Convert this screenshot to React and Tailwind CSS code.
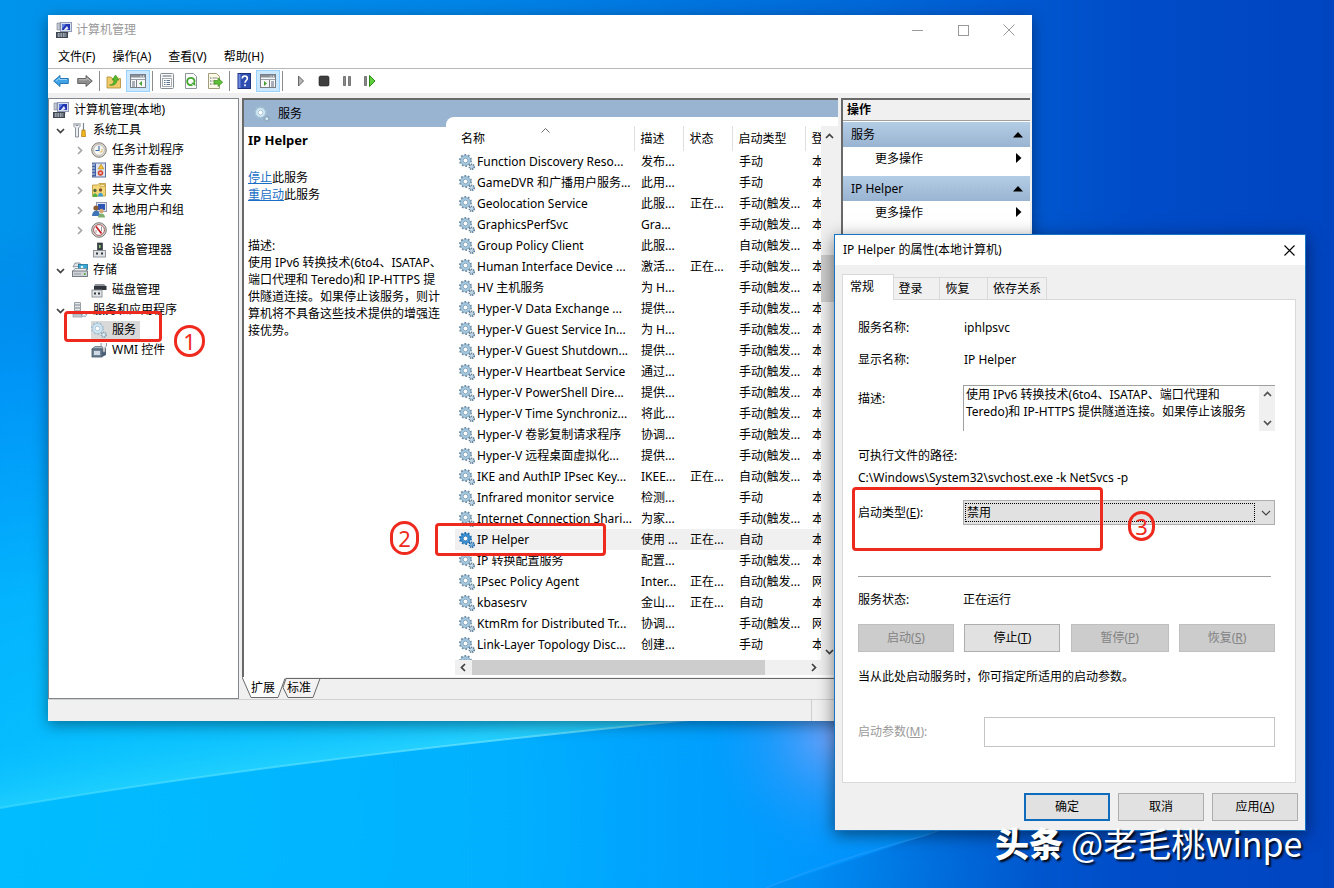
import React from "react";

const svgBase = { width: 16, height: 16, viewBox: "0 0 16 16", fill: "none", "aria-hidden": true, className: "block shrink-0" };

function Icon({ children }) {
  return <svg {...svgBase}>{children}</svg>;
}

/* ---------- tree and title icons ---------- */

const ComputerIcon = () => (
  <Icon>
    <rect x="4.5" y="0.5" width="11" height="9" fill="#d6dcec" stroke="#8f9bb8" />
    <rect x="6" y="2" width="8" height="6" fill="#2236b4" />
    <path d="M6 2h4l-4 5z" fill="#5f7fe0" />
    <path d="M9.5 9.5h3v2h-3z" fill="#9aa4b8" />
    <path d="M1 1h3v7H1z" fill="#c3c9d4" stroke="#747c8c" strokeWidth="0.6" />
    <rect x="0.5" y="10.5" width="11" height="5" fill="#5b6470" stroke="#3e4650" />
    <path d="M2 12h8M2 14h8" stroke="#d8dde4" strokeDasharray="1.5 1" />
    <path d="M7 9l4-5 1.500 3z" fill="#e8ecf8" />
  </Icon>
);

const ToolsIcon = () => (
  <Icon>
    <path d="M2 1v3.500L3.500 6v9h3V6L8 4.500V1M4 1v2.500h2V1" fill="#eceff2" stroke="#7d858e" strokeWidth="0.9" />
    <path d="M11.500 1v7" stroke="#7d858e" strokeWidth="1.200" />
    <path d="M10 8h3l.5 6.500h-4z" fill="#f2b81c" stroke="#a87408" strokeWidth="0.7" />
  </Icon>
);

const ClockIcon = () => (
  <Icon>
    <circle cx="8" cy="8" r="7.300" fill="#d9d6cf" stroke="#77726b" strokeWidth="0.9" />
    <circle cx="8" cy="8" r="5.300" fill="#f7f8f4" stroke="#a9a59c" strokeWidth="0.6" />
    <path d="M8 4v4.500H4.500" stroke="#3568a8" strokeWidth="1.100" />
    <path d="M11 6.500v3.500H8.500" stroke="#dca93a" strokeWidth="0.8" />
  </Icon>
);

const EventIcon = () => (
  <Icon>
    <rect x="1.500" y="1" width="13" height="14" fill="#dfe6f2" stroke="#5b6f9c" />
    <rect x="2" y="1.500" width="3" height="13" fill="#3e5fa8" />
    <path d="M1 3h3M1 6h3M1 9h3M1 12h3" stroke="#fff" strokeWidth="0.8" />
    <path d="M10 2l3 5H7z" fill="#f3c13a" stroke="#a67b12" strokeWidth="0.5" />
    <circle cx="9.500" cy="11" r="2.800" fill="#d6402c" />
    <path d="M8.300 9.800l2.400 2.400m0-2.400l-2.400 2.400" stroke="#fff" strokeWidth="0.8" />
  </Icon>
);

const SharedIcon = () => (
  <Icon>
    <path d="M1.500 3h5l1.500-1.500h6.500V14h-13z" fill="#f5d77a" stroke="#b99335" strokeWidth="0.8" />
    <path d="M9 2.500h4.500v2H9z" fill="#fbe9a9" stroke="#b99335" strokeWidth="0.6" />
    <circle cx="4" cy="8.500" r="1.700" fill="#556b3a" />
    <circle cx="9.500" cy="8" r="1.700" fill="#7a4f2c" />
    <path d="M1.500 15c0-5 5-5 5 0z" fill="#55b04a" />
    <path d="M7 14.500c0-5 5-5 5 0z" fill="#3c9bd0" />
  </Icon>
);

const UsersIcon = () => (
  <Icon>
    <rect x="5.500" y="0.5" width="10" height="9" fill="#dfe4ee" stroke="#8c97ae" />
    <rect x="7" y="2" width="7" height="6" fill="#2c55b8" />
    <circle cx="5" cy="6" r="2.600" fill="#8a5c33" />
    <path d="M1 14c0-7 8-7 8 0z" fill="#3f75b8" />
    <circle cx="10.500" cy="9" r="2.200" fill="#d8a66f" />
    <path d="M7 15.500c0-5.500 7-5.500 7 0z" fill="#7db070" />
  </Icon>
);

const PerfIcon = () => (
  <Icon>
    <circle cx="8" cy="8" r="7.300" fill="#d5d5d3" stroke="#6c6c6a" strokeWidth="0.9" />
    <circle cx="8" cy="8" r="5.400" fill="#fff" stroke="#9a3a3a" strokeWidth="0.8" />
    <path d="M5 4.500l5.500 7" stroke="#c8202a" strokeWidth="1.800" />
    <path d="M10.500 4.500v5M5 8v3" stroke="#8c8c8c" strokeWidth="0.9" />
  </Icon>
);

const DeviceIcon = () => (
  <Icon>
    <rect x="6.500" y="1" width="5" height="8" fill="#3c4248" stroke="#22272b" strokeWidth="0.6" />
    <rect x="8" y="3" width="1.500" height="3" fill="#8fd07a" />
    <rect x="2.500" y="8.500" width="12" height="6.500" fill="#dfe2e5" stroke="#868c93" strokeWidth="0.9" />
    <path d="M5 10.500h2v2H5zM10 10.500h2v2h-2z" fill="#33383d" />
  </Icon>
);

const StorageIcon = () => (
  <Icon>
    <path d="M1 5l2-4h5l1 3z" fill="#e2e5e8" stroke="#7c848d" strokeWidth="0.8" />
    <rect x="6.500" y="2.500" width="9" height="5" fill="#37a9d8" stroke="#1f6f96" strokeWidth="0.8" />
    <circle cx="10" cy="5" r="1.300" fill="#dff3fb" />
    <path d="M1 9l2-2.500h11.500V9" fill="#eef0f2" stroke="#7c848d" strokeWidth="0.8" />
    <rect x="0.500" y="9" width="15" height="5.500" fill="#d0d4d8" stroke="#6b737b" strokeWidth="0.9" />
    <path d="M12 11h1.500v2H12z" fill="#4caf3a" />
    <path d="M2 12h7" stroke="#8f979f" />
  </Icon>
);

const DiskIcon = () => (
  <Icon>
    <path d="M4 2h9l2.500 2.500H3z" fill="#8d949b" />
    <rect x="3" y="4" width="12.500" height="4" fill="#30363b" />
    <rect x="1" y="8" width="10" height="7" fill="#e2e5e8" stroke="#858c93" strokeWidth="0.9" />
    <path d="M3 10.500h2v2H3zM7 10.500h2v2H7z" fill="#33383d" />
  </Icon>
);

const ServerIcon = () => (
  <Icon>
    <path d="M2.500 0.500h6v12h-6z" fill="#e4e8ea" stroke="#8f979d" strokeWidth="0.9" />
    <path d="M3 3h5M3 6h5M3 9h5" stroke="#7a838a" />
    <rect x="1" y="12" width="9" height="3" fill="#c2c9ce" stroke="#8f979d" strokeWidth="0.7" />
    <circle cx="12" cy="12" r="2.400" stroke="#7fa0b8" strokeWidth="1.600" strokeDasharray="1.200 0.700" />
  </Icon>
);

const WmiIcon = () => (
  <Icon>
    <path d="M1 7l3-2.500h9L15 7z" fill="#a9b7c4" stroke="#566574" strokeWidth="0.7" />
    <rect x="1" y="7" width="10" height="8" fill="#6d8296" stroke="#42535f" strokeWidth="0.8" />
    <path d="M11 7h4v6l-4 2z" fill="#4a6074" />
    <path d="M3 9h6v4H3z" fill="#cfdae4" />
    <path d="M10 1v3l2 1.500V10h2V5.500L15.500 4V1" fill="#f3f4f5" stroke="#79828a" strokeWidth="0.8" />
  </Icon>
);

function GearIcon({ tone = "normal" }) {
  const c = {
    normal: { teeth: "#6c8da6", ring: "#a4c8e0", edge: "#64869f", small: "#5f7f97" },
    active: { teeth: "#1d6fb4", ring: "#3a8fd0", edge: "#1560a0", small: "#1a66a8" },
    faint: { teeth: "#a4c0d2", ring: "#cfe6f3", edge: "#90b4ca", small: "#8fa9ba" },
  }[tone];
  return (
    <Icon>
      <circle cx="6.500" cy="6.500" r="5.500" stroke={c.teeth} strokeWidth="2" strokeDasharray="1.700 1.756" />
      <circle cx="6.500" cy="6.500" r="3.800" fill="#fff" stroke={c.ring} strokeWidth="2.600" />
      <circle cx="6.500" cy="6.500" r="5" stroke={c.edge} strokeWidth="0.5" />
      <circle cx="6.500" cy="6.500" r="2.300" stroke={c.edge} strokeWidth="0.7" />
      <circle cx="12.800" cy="12.800" r="2.300" stroke={c.small} strokeWidth="1.900" strokeDasharray="1.200 0.606" />
      <circle cx="12.800" cy="12.800" r="1.400" fill={c.ring} />
      <circle cx="12.800" cy="12.800" r="0.500" fill="#fff" />
    </Icon>
  );
}

/* ---------- toolbar icons ---------- */

const BackIcon = () => (
  <Icon><path d="M0.700 8L7 2.500v3h8.300v5H7v3z" fill="#3fa3e6" stroke="#1b6db0" strokeWidth="0.9" /><path d="M3 8l3.500-3v1.500H14" stroke="#a9dbfa" strokeWidth="0.8" /></Icon>
);
const ForwardIcon = () => (
  <Icon><path d="M15.300 8L9 2.500v3H0.700v5H9v3z" fill="#8d8d8d" stroke="#5e5e5e" strokeWidth="0.9" /><path d="M2 6.800h8V5l3 3" stroke="#c9c9c9" strokeWidth="0.8" /></Icon>
);
const UpFolderIcon = () => (
  <Icon>
    <path d="M1 4h4l1.500 1.500H14.500V15H1z" fill="#f1cb69" stroke="#b08a35" strokeWidth="0.8" />
    <path d="M8.500 4l4.500-1v3z" fill="#fff3c4" />
    <path d="M3.500 12c3 0 4.500-2 4.500-5H6l3.500-5L13 7h-2c0 4-3 6-7.500 5z" fill="#58b82c" stroke="#38861a" strokeWidth="0.6" />
  </Icon>
);
const PaneIcon = ({ side }) => (
  <Icon>
    <rect x="0.500" y="1.500" width="15" height="13" fill="#f7f7f7" stroke="#7a7f86" />
    <path d="M1 2h14v2.500H1z" fill="#8a9099" />
    <path d="M10.500 3.200h1M13 3.200h1" stroke="#fff" />
    <path d="M1 6.500h14" stroke="#9aa0a8" />
    {side === "left" ? (
      <>
        <path d="M6.500 7v7.500" stroke="#7a7f86" />
        <path d="M2 9h3M2 11h3M2 13h3" stroke="#5c6b80" />
        <path d="M12 8v5L9 10.500z" fill="#46a032" />
      </>
    ) : (
      <>
        <path d="M9.500 7v7.500" stroke="#7a7f86" />
        <path d="M11 9h3M11 11h3M11 13h3" stroke="#5c6b80" />
        <path d="M4 8v5l3-2.500z" fill="#46a032" />
      </>
    )}
  </Icon>
);
const PropertiesIcon = () => (
  <Icon>
    <rect x="1.500" y="0.500" width="13" height="15" rx="1" fill="#fafafa" stroke="#868c94" />
    <path d="M3.500 3h9" stroke="#9299a1" strokeWidth="1.500" />
    <rect x="3.500" y="5.500" width="9" height="8" fill="#fff" stroke="#9299a1" strokeWidth="0.8" />
    <path d="M5 7.500h1.500M7.500 7.500H11M5 9.500h1.500M7.500 9.500H11M5 11.500h1.500M7.500 11.500H11" stroke="#5d7390" />
  </Icon>
);
const RefreshIcon = () => (
  <Icon>
    <path d="M2.500 0.500h8l3 3v12h-11z" fill="#fcfcfc" stroke="#8f959c" />
    <path d="M11.500 9a3.700 3.700 0 1 0-2 2.800" stroke="#3fa52a" strokeWidth="1.800" />
    <path d="M8 10l4.500 3-.5-4z" fill="#3fa52a" />
  </Icon>
);
const ExportIcon = () => (
  <Icon>
    <path d="M1.500 0.500h8l3 3v12h-11z" fill="#fcf9e6" stroke="#a39c7c" />
    <path d="M3 5h1.500M3 8h1.500M3 11h1.500" stroke="#5b6b80" strokeWidth="1.200" />
    <path d="M5.500 5h5M5.500 8h3M5.500 11h4" stroke="#8f9390" />
    <path d="M7 7.500h4V5l4.700 4.200L11 13.500V11H7z" fill="#5cbf36" stroke="#35861a" strokeWidth="0.6" />
  </Icon>
);
const HelpIcon = () => (
  <svg {...svgBase}>
    <rect x="2" y="0.500" width="12.500" height="15" fill="#2f4fb0" stroke="#1d3280" />
    <path d="M2.500 1h2v14h-2z" fill="#6f8be0" />
    <path d="M6.300 5.500c0-3.300 5-3.300 5 0 0 2-2.300 2-2.300 4.300M9 11.300v1.900" stroke="#fff" strokeWidth="1.600" />
  </svg>
);
const PlayIcon = () => (
  <Icon><path d="M5.500 3v10l5-5z" fill="#b5b5b5" stroke="#666" strokeWidth="1" /></Icon>
);
const StopIcon = () => (
  <Icon><rect x="3" y="3" width="10" height="10" rx="1.500" fill="#3e3e3e" stroke="#222" strokeWidth="0.6" /></Icon>
);
const PauseIcon = () => (
  <Icon><path d="M4.500 3.500h2v9h-2zM9.500 3.500h2v9h-2z" fill="#8a8a8a" stroke="#555" strokeWidth="0.7" /></Icon>
);
const RestartIcon = () => (
  <Icon><path d="M2.500 3.500h2v9h-2z" fill="#8a8a8a" stroke="#555" strokeWidth="0.7" /><path d="M7.500 2.500v11l5.500-5.500z" fill="#5fce3c" stroke="#2c8a18" strokeWidth="1" /></Icon>
);

function Chevron({ dir, className }) {
  const d = { up: "M1 6l3.500-3.500L8 6", down: "M1 3l3.500 3.500L8 3", left: "M6 1L2.500 4.500 6 8", right: "M3 1l3.500 3.500L3 8" }[dir];
  return (
    <svg width="9" height="9" viewBox="0 0 9 9" fill="none" aria-hidden="true" className={className}>
      <path d={d} stroke="currentColor" strokeWidth="1.700" />
    </svg>
  );
}

/* ---------- data ---------- */

const tree = [
  { level: 0, text: "计算机管理(本地)", Pic: ComputerIcon },
  { level: 1, text: "系统工具", Pic: ToolsIcon, arrow: "down" },
  { level: 2, text: "任务计划程序", Pic: ClockIcon, arrow: "right" },
  { level: 2, text: "事件查看器", Pic: EventIcon, arrow: "right" },
  { level: 2, text: "共享文件夹", Pic: SharedIcon, arrow: "right" },
  { level: 2, text: "本地用户和组", Pic: UsersIcon, arrow: "right" },
  { level: 2, text: "性能", Pic: PerfIcon, arrow: "right" },
  { level: 2, text: "设备管理器", Pic: DeviceIcon },
  { level: 1, text: "存储", Pic: StorageIcon, arrow: "down" },
  { level: 2, text: "磁盘管理", Pic: DiskIcon },
  { level: 1, text: "服务和应用程序", Pic: ServerIcon, arrow: "down" },
  { level: 2, text: "服务", Pic: () => <GearIcon tone="faint" />, selected: true },
  { level: 2, text: "WMI 控件", Pic: WmiIcon },
];

const M = "手动";
const A = "自动";
const MT = "手动(触发...";
const AT = "自动(触发...";
const ON = "正在...";

const services = [
  ["Function Discovery Reso...", "发布...", "", M, "本"],
  ["GameDVR 和广播用户服务...", "此用...", "", M, "本"],
  ["Geolocation Service", "此服...", ON, MT, "本"],
  ["GraphicsPerfSvc", "Gra...", "", MT, "本"],
  ["Group Policy Client", "此服...", "", AT, "本"],
  ["Human Interface Device ...", "激活...", ON, MT, "本"],
  ["HV 主机服务", "为 H...", "", MT, "本"],
  ["Hyper-V Data Exchange ...", "提供...", "", MT, "本"],
  ["Hyper-V Guest Service In...", "为 H...", "", MT, "本"],
  ["Hyper-V Guest Shutdown...", "提供...", "", MT, "本"],
  ["Hyper-V Heartbeat Service", "通过...", "", MT, "本"],
  ["Hyper-V PowerShell Dire...", "提供...", "", MT, "本"],
  ["Hyper-V Time Synchroniz...", "将此...", "", MT, "本"],
  ["Hyper-V 卷影复制请求程序", "协调...", "", MT, "本"],
  ["Hyper-V 远程桌面虚拟化...", "提供...", "", MT, "本"],
  ["IKE and AuthIP IPsec Key...", "IKEE...", ON, AT, "本"],
  ["Infrared monitor service", "检测...", "", M, "本"],
  ["Internet Connection Shari...", "为家...", "", MT, "本"],
  ["IP Helper", "使用 ...", ON, A, "本"],
  ["IP 转换配置服务", "配置...", "", MT, "本"],
  ["IPsec Policy Agent", "Inter...", ON, AT, "网"],
  ["kbasesrv", "金山...", ON, A, "本"],
  ["KtmRm for Distributed Tr...", "协调...", "", MT, "网"],
  ["Link-Layer Topology Disc...", "创建...", "", M, "本"],
];

/* ---------- main window ---------- */

function ToolButton({ label, on, children }) {
  return (
    <button type="button" aria-label={label} className={"flex h-[22px] w-6 items-center justify-center " + (on ? "border border-[#99d1ff] bg-[#cce8ff]" : "")}>
      {children}
    </button>
  );
}
const ToolSep = () => <span className="mx-0.5 h-5 w-px bg-[#8c8c8c]" />;

function TitleBar() {
  return (
    <header className="flex h-[30px] items-center bg-white">
      <span className="pl-2"><ComputerIcon /></span>
      <h1 className="flex-1 pl-1 text-[#999]">计算机管理</h1>
      <button type="button" aria-label="最小化" className="flex h-full w-[46px] items-center justify-center">
        <svg width="11" height="11" viewBox="0 0 11 11" aria-hidden="true"><path d="M0 5.500h11" stroke="#999" /></svg>
      </button>
      <button type="button" aria-label="最大化" className="flex h-full w-[46px] items-center justify-center">
        <svg width="11" height="11" viewBox="0 0 11 11" aria-hidden="true" fill="none"><rect x="0.500" y="0.500" width="10" height="10" stroke="#999" /></svg>
      </button>
      <button type="button" aria-label="关闭" className="flex h-full w-[46px] items-center justify-center">
        <svg width="12" height="12" viewBox="0 0 12 12" aria-hidden="true"><path d="M.5.5l11 11m0-11l-11 11" stroke="#999" /></svg>
      </button>
    </header>
  );
}

function Tree() {
  const indent = ["pl-1", "pl-[7px]", "pl-[26px]"];
  return (
    <nav aria-label="控制台树" className="w-[191px] shrink-0 border border-[#828790] bg-white pt-px">
      <ul>
        {tree.map((n) => (
          <li key={n.text}>
            <button type="button" className={"flex h-5 w-full items-center text-left " + indent[n.level]}>
              {n.level > 0 && (
                <span className="w-4 shrink-0">
                  {n.arrow && <Chevron dir={n.arrow} className={n.arrow === "down" ? "text-[#404040]" : "text-[#a6a6a6]"} />}
                </span>
              )}
              <span className={"flex h-[18px] items-center gap-[5px] pr-1 " + (n.selected ? "bg-[#d9d9d9]" : "")}>
                <n.Pic />
                {n.text}
              </span>
            </button>
          </li>
        ))}
      </ul>
    </nav>
  );
}

function ServiceTable() {
  return (
    <table className="w-full table-fixed border-collapse">
      <colgroup>
        <col />
        <col className="w-[49px]" />
        <col className="w-[49px]" />
        <col className="w-[73px]" />
        <col className="w-4" />
      </colgroup>
      <thead>
        <tr className="h-[25px]">
          {["名称", "描述", "状态", "启动类型", "登"].map((h, i) => (
            <th key={h} scope="col" className={"relative overflow-hidden whitespace-nowrap p-0 text-left font-normal " + (i === 0 ? "pl-1.5" : "border-l border-[#e0e0e0] pl-1.5")}>
              {h}
              {i === 0 && (
                <svg width="9" height="5" viewBox="0 0 9 5" fill="none" aria-hidden="true" className="absolute left-[86px] top-0.5">
                  <path d="M.5 4.500l4-4 4 4" stroke="#6d6d6d" />
                </svg>
              )}
            </th>
          ))}
        </tr>
      </thead>
      <tbody>
        {services.map((row) => {
          const sel = row[0] === "IP Helper";
          return (
            <tr key={row[0]} className={"h-[21px] " + (sel ? "bg-[#f0f0f0]" : "")}>
              {row.map((cell, i) => (
                <td key={i} className={"overflow-hidden whitespace-nowrap p-0 leading-5 " + (i === 0 ? "" : "pl-[7px]")}>
                  {i === 0 ? (
                    <span className="flex items-center gap-0.5 pl-1">
                      <GearIcon tone={sel ? "active" : "normal"} />
                      {cell}
                    </span>
                  ) : (
                    cell
                  )}
                </td>
              ))}
            </tr>
          );
        })}
      </tbody>
    </table>
  );
}

function ServicesPane() {
  return (
    <section className="flex w-[596px] shrink-0 flex-col">
      <div className="flex border-l-2 border-t-2 border-[#696969] bg-[#99b4d1]">
        <div className="flex w-[202px] shrink-0 flex-col">
          <h2 className="flex h-[27px] items-center gap-2 pl-2.5">
            <GearIcon tone="faint" />
            服务
          </h2>
          <div className="flex-1 bg-white pl-1 leading-[17px]">
            <h3 className="pt-[5px] text-[13px] font-bold">IP Helper</h3>
            <p className="pt-5">
              <a href="#stop" className="text-[#1a6fc4] underline">停止</a>此服务
            </p>
            <p>
              <a href="#restart" className="text-[#1a6fc4] underline">重启动</a>此服务
            </p>
            <p className="whitespace-pre pt-[34px]">
              {"描述:\n使用 IPv6 转换技术(6to4、ISATAP、\n端口代理和 Teredo)和 IP-HTTPS 提\n供隧道连接。如果停止该服务，则计\n算机将不具备这些技术提供的增强连\n接优势。"}
            </p>
          </div>
        </div>
        <div className="min-w-0 flex-1 pt-[17px]">
          <div className="rounded-tl-lg bg-white pb-0.5 pl-[9px] pt-[9px]">
            <div className="flex">
              <div className="min-w-0 flex-1">
                <ServiceTable />
                <div className="h-[5px] overflow-hidden pl-1"><GearIcon /></div>
              </div>
              <div className="flex w-[17px] shrink-0 flex-col items-center bg-[#f0f0f0] text-[#404040]">
                <Chevron dir="up" className="mt-1.5" />
                <span className="mt-[114px] h-[47px] w-full bg-[#cdcdcd]" />
                <span className="flex-1" />
                <Chevron dir="down" className="mb-1" />
              </div>
            </div>
            <div className="flex h-[15px] items-center bg-[#f0f0f0] pr-5 text-[#404040]">
              <Chevron dir="left" className="mx-1" />
              <span className="h-full w-[293px] bg-[#cdcdcd]" />
              <span className="flex-1" />
              <Chevron dir="right" />
            </div>
          </div>
        </div>
      </div>
      <div className="relative h-[22px]">
        <svg width="100%" height="22" aria-hidden="true" className="absolute inset-0">
          <path d="M78 1.500h519" stroke="#696969" />
          <path d="M44 1.500h34l-7 19H46l-5-10z" fill="#f4f2f2" stroke="#696969" />
          <path d="M0 0l9 20.500h27L43 0z" fill="#fff" />
          <path d="M0 0l9 20.500h27L43 1.500" fill="none" stroke="#696969" />
        </svg>
        <div role="tablist" className="relative flex h-full items-center gap-3 pl-[9px]">
          <button type="button" role="tab" aria-selected="true">扩展</button>
          <button type="button" role="tab" aria-selected="false">标准</button>
        </div>
      </div>
    </section>
  );
}

function ActionGroup({ title }) {
  return (
    <section>
      <h3 className="flex h-[25px] items-center justify-between bg-linear-to-b from-[#b4cde6] to-[#99b4d1] pl-2 pr-[7px]">
        {title}
        <svg width="10" height="6" viewBox="0 0 10 6" aria-hidden="true"><path d="M0 5.500L5 0l5 5.500z" /></svg>
      </h3>
      <button type="button" className="flex h-[29px] w-full items-start justify-between pl-8 pr-2 pt-0.5 text-left leading-5">
        更多操作
        <svg width="6" height="10" viewBox="0 0 6 10" aria-hidden="true" className="mt-1"><path d="M0 0l5.500 5L0 10z" /></svg>
      </button>
    </section>
  );
}

function ManagementWindow() {
  return (
    <main className="absolute left-12 top-[15px] w-[984px] bg-[#f0f0f0] shadow-[0_4px_14px_rgba(0,0,0,0.4)]">
      <TitleBar />
      <div role="menubar" className="flex h-6 items-center gap-[17px] border-b border-[#b8b8b8] bg-white pl-2.5">
        {["文件(F)", "操作(A)", "查看(V)", "帮助(H)"].map((m) => (
          <button key={m} type="button" role="menuitem">{m}</button>
        ))}
      </div>
      <div role="toolbar" aria-label="工具栏" className="flex h-6 items-center bg-white pl-px">
        <ToolButton label="后退"><BackIcon /></ToolButton>
        <ToolButton label="前进"><ForwardIcon /></ToolButton>
        <ToolSep />
        <ToolButton label="上移"><UpFolderIcon /></ToolButton>
        <ToolButton label="显示控制台树" on><PaneIcon side="left" /></ToolButton>
        <ToolSep />
        <ToolButton label="属性"><PropertiesIcon /></ToolButton>
        <ToolButton label="刷新"><RefreshIcon /></ToolButton>
        <ToolButton label="导出列表"><ExportIcon /></ToolButton>
        <ToolSep />
        <ToolButton label="帮助"><HelpIcon /></ToolButton>
        <ToolButton label="显示操作窗格" on><PaneIcon side="right" /></ToolButton>
        <ToolSep />
        <div className="flex gap-0 pl-1 [&>button]:w-[23px]">
          <ToolButton label="启动服务"><PlayIcon /></ToolButton>
          <ToolButton label="停止服务"><StopIcon /></ToolButton>
          <ToolButton label="暂停服务"><PauseIcon /></ToolButton>
          <ToolButton label="重启动服务"><RestartIcon /></ToolButton>
        </div>
      </div>
      <div className="flex pr-0.5 pt-[5px]">
        <Tree />
        <div className="w-[3px] shrink-0" />
        <ServicesPane />
        <div className="w-[3px] shrink-0" />
        <aside className="flex-1 border-l-2 border-t-2 border-[#696969] bg-white">
          <h2 className="mb-px h-[21px] border-b border-[#a0a0a0] bg-[#f0f0f0] pl-1 font-bold leading-5">操作</h2>
          <ActionGroup title="服务" />
          <ActionGroup title="IP Helper" />
        </aside>
      </div>
      <footer className="flex h-[22px] border-t border-[#d0d0d0]">
        <span className="w-[764px] border-r border-[#d0d0d0]" />
      </footer>
    </main>
  );
}

/* ---------- properties dialog ---------- */

function PushButton({ children, disabled, primary, className = "" }) {
  const look = disabled
    ? "border border-[#bfbfbf] bg-[#cccccc] text-[#838383]"
    : primary
      ? "border-2 border-[#0f6cbd] bg-[#e1e1e1]"
      : "border border-[#adadad] bg-[#e1e1e1]";
  return (
    <button type="button" disabled={disabled} className={"h-7 " + look + " " + className}>
      {children}
    </button>
  );
}

function PropertiesDialog() {
  return (
    <div role="dialog" aria-label="IP Helper 的属性(本地计算机)" className="absolute left-[834px] top-[234px] w-[472px] border border-[#1874c4] bg-[#f0f0f0] shadow-[0_4px_16px_rgba(0,0,0,0.5)]">
      <header className="flex h-[30px] items-center justify-between bg-white pl-2 pr-2.5">
        <h2>IP Helper 的属性(本地计算机)</h2>
        <button type="button" aria-label="关闭">
          <svg width="11" height="11" viewBox="0 0 11 11" aria-hidden="true"><path d="M.5.5l10 10m0-10l-10 10" stroke="#000" strokeWidth="1.100" /></svg>
        </button>
      </header>
      <div className="px-[7px] pb-[9px] pt-[9px]">
        <div role="tablist" className="flex items-end">
          <button type="button" role="tab" aria-selected="true" className="relative z-10 -mb-px h-[26px] w-[52px] border border-b-0 border-[#d9d9d9] bg-white pb-0.5 pr-3">常规</button>
          <button type="button" role="tab" aria-selected="false" className="h-[22px] w-[46px] border border-b-0 border-l-0 border-[#d9d9d9] pr-3">登录</button>
          <button type="button" role="tab" aria-selected="false" className="h-[22px] w-12 border border-b-0 border-l-0 border-[#d9d9d9] pr-3">恢复</button>
          <button type="button" role="tab" aria-selected="false" className="h-[22px] w-[59px] border border-b-0 border-l-0 border-[#d9d9d9]">依存关系</button>
        </div>
        <div className="mr-0.5 border border-[#d9d9d9] bg-white pb-[35px] pl-[15px] pr-5 pt-[18px]">
          <dl className="grid grid-cols-[106px_1fr] gap-y-3 leading-5">
            <dt>服务名称:</dt>
            <dd>iphlpsvc</dd>
            <dt>显示名称:</dt>
            <dd>IP Helper</dd>
          </dl>
          <div className="mt-[15px] flex">
            <label htmlFor="desc" className="w-[105px] shrink-0 pt-1 leading-5">描述:</label>
            <div className="flex h-[46px] flex-1 border-l border-t border-[#a0a0a0]">
              <textarea
                id="desc"
                readOnly
                className="min-w-0 flex-1 resize-none overflow-hidden whitespace-pre bg-white pl-0.5 leading-[17px] outline-none"
                defaultValue={"使用 IPv6 转换技术(6to4、ISATAP、端口代理和\nTeredo)和 IP-HTTPS 提供隧道连接。如果停止该服务"}
              />
              <div className="flex w-4 flex-col items-center justify-between bg-[#f0f0f0] py-1 text-[#505050]">
                <Chevron dir="up" />
                <Chevron dir="down" />
              </div>
            </div>
          </div>
          <p className="mt-3.5 leading-[22px]">可执行文件的路径:</p>
          <p className="leading-[22px]">C:\Windows\System32\svchost.exe -k NetSvcs -p</p>
          <div className="mt-[11px] flex items-center">
            <label htmlFor="startup" className="w-[105px] shrink-0">启动类型(<u>E</u>):</label>
            <div className="relative flex-1">
              <select id="startup" defaultValue="禁用" className="h-[25px] w-full appearance-none border border-[#adadad] bg-[#e1e1e1] pl-[3px] outline-none">
                <option>禁用</option>
                <option>手动</option>
                <option>自动</option>
              </select>
              <span className="pointer-events-none absolute inset-y-[3px] left-0.5 right-5 border border-dotted border-black" />
              <svg width="10" height="6" viewBox="0 0 10 6" fill="none" aria-hidden="true" className="pointer-events-none absolute right-1 top-2.5"><path d="M1 1l4 4 4-4" stroke="#444" strokeWidth="1.100" /></svg>
            </div>
          </div>
          <hr className="mr-1 mt-[51px] border-[#a0a0a0]" />
          <dl className="mt-3 grid grid-cols-[105px_1fr] leading-[22px]">
            <dt>服务状态:</dt>
            <dd>正在运行</dd>
          </dl>
          <div className="mt-[13px] flex justify-between">
            <PushButton disabled className="w-24">启动(<u>S</u>)</PushButton>
            <PushButton className="w-24">停止(<u>T</u>)</PushButton>
            <PushButton disabled className="w-[98px]">暂停(<u>P</u>)</PushButton>
            <PushButton disabled className="w-24">恢复(<u>R</u>)</PushButton>
          </div>
          <p className="mt-3.5 leading-[22px]">当从此处启动服务时，你可指定所适用的启动参数。</p>
          <div className="mt-[29px] flex items-center">
            <label htmlFor="params" className="w-[126px] shrink-0 text-[#9a9a9a]">启动参数(<u>M</u>):</label>
            <input id="params" type="text" disabled className="h-[30px] min-w-0 flex-1 border border-[#c4c4c4] bg-white px-1" />
          </div>
        </div>
        <div className="mt-2.5 flex justify-end gap-2">
          <PushButton primary className="w-[86px]">确定</PushButton>
          <PushButton className="w-[86px]">取消</PushButton>
          <PushButton className="w-[86px]">应用(<u>A</u>)</PushButton>
        </div>
      </div>
    </div>
  );
}

/* ---------- desktop ---------- */

function Wallpaper() {
  return (
    <svg className="absolute inset-0 h-full w-full" viewBox="0 0 1334 888" preserveAspectRatio="none" aria-hidden="true">
      <defs>
        <linearGradient id="base" x1="0" y1="0" x2="1" y2="0">
          <stop offset="0" stopColor="#0094ec" />
          <stop offset="0.35" stopColor="#0084e6" />
          <stop offset="0.65" stopColor="#0068d8" />
          <stop offset="0.85" stopColor="#004cc8" />
          <stop offset="1" stopColor="#0044c0" />
        </linearGradient>
        <radialGradient id="glow" gradientUnits="userSpaceOnUse" cx="160" cy="820" r="880" gradientTransform="translate(0 262) scale(1 0.68)">
          <stop offset="0" stopColor="#08c4ff" />
          <stop offset="0.4" stopColor="#04b6ff" stopOpacity="0.95" />
          <stop offset="0.75" stopColor="#0096fa" stopOpacity="0.8" />
          <stop offset="1" stopColor="#0078e4" stopOpacity="0" />
        </radialGradient>
        <radialGradient id="haze" gradientUnits="userSpaceOnUse" cx="835" cy="735" r="130">
          <stop offset="0" stopColor="#7da4fa" stopOpacity="0.9" />
          <stop offset="0.5" stopColor="#3a9cfa" stopOpacity="0.5" />
          <stop offset="1" stopColor="#109cff" stopOpacity="0" />
        </radialGradient>
        <linearGradient id="streak" x1="0" y1="0" x2="1" y2="0">
          <stop offset="0" stopColor="#4fe0ff" stopOpacity="0.5" />
          <stop offset="0.9" stopColor="#6fe4ff" stopOpacity="0.8" />
          <stop offset="1" stopColor="#9fd4ff" stopOpacity="0.4" />
        </linearGradient>
        <linearGradient id="above" gradientUnits="userSpaceOnUse" x1="330" y1="762" x2="318" y2="690">
          <stop offset="0" stopColor="#2cd8ff" stopOpacity="0.75" />
          <stop offset="1" stopColor="#10c4ff" stopOpacity="0" />
        </linearGradient>
        <linearGradient id="floor" x1="0" y1="0" x2="1" y2="0">
          <stop offset="0" stopColor="#00bcff" stopOpacity="0.9" />
          <stop offset="0.5" stopColor="#00b0ff" stopOpacity="0.8" />
          <stop offset="1" stopColor="#008cff" stopOpacity="0.9" />
        </linearGradient>
      </defs>
      <rect width="1334" height="888" fill="url(#base)" />
      <rect width="1334" height="888" fill="url(#glow)" />
      <path d="M0 680H760V709L690 720C520 737 260 764 0 808z" fill="url(#above)" />
      <path d="M0 808C260 764 520 737 690 720L980 700V800L927 835L766 888H0z" fill="url(#floor)" />
      <rect x="700" y="600" width="270" height="270" fill="url(#haze)" />
      <path d="M0 808C260 764 520 737 690 720" fill="none" stroke="url(#streak)" strokeWidth="2" />
      <path d="M766 888Q840 858 927 835L1000 806" fill="none" stroke="#30a0ff" strokeOpacity="0.5" strokeWidth="1.500" />
    </svg>
  );
}

function Marker({ n, circle, frame }) {
  return (
    <>
      <span aria-hidden="true" className={"pointer-events-none absolute rounded border-[3px] border-[#ee2a1e] " + frame} />
      <span className={"pointer-events-none absolute flex items-center justify-center rounded-full border-[3px] border-[#ee2a1e] text-[22px] leading-none text-[#ee2a1e] " + circle}>{n}</span>
    </>
  );
}

export default function App() {
  return (
    <div className="relative min-h-screen w-full overflow-hidden bg-[#0078d7] font-['Noto_Sans','Noto_Sans_CJK_SC',sans-serif] text-xs text-black">
      <Wallpaper />
      <ManagementWindow />
      <PropertiesDialog />
      <Marker n="1" frame="left-16 top-[311px] h-[31px] w-[98px]" circle="left-[174px] top-[325px] h-8 w-[31px]" />
      <Marker n="2" frame="left-[435px] top-[523px] h-[33px] w-[171px]" circle="left-[390px] top-[521px] h-[34px] w-[29px]" />
      <Marker n="3" frame="left-[852px] top-[487px] h-16 w-[251px]" circle="left-[1128px] top-[511px] h-[30px] w-[27px]" />
      <p className="absolute left-[995px] top-[823px] flex items-center gap-2 whitespace-nowrap font-['Noto_Sans_CJK_SC',sans-serif] text-[34px] leading-10 text-white [text-shadow:2px_2px_2px_rgba(0,0,0,0.9)]">
        <strong className="font-black">头条</strong>
        <span>@老毛桃winpe</span>
      </p>
    </div>
  );
}
